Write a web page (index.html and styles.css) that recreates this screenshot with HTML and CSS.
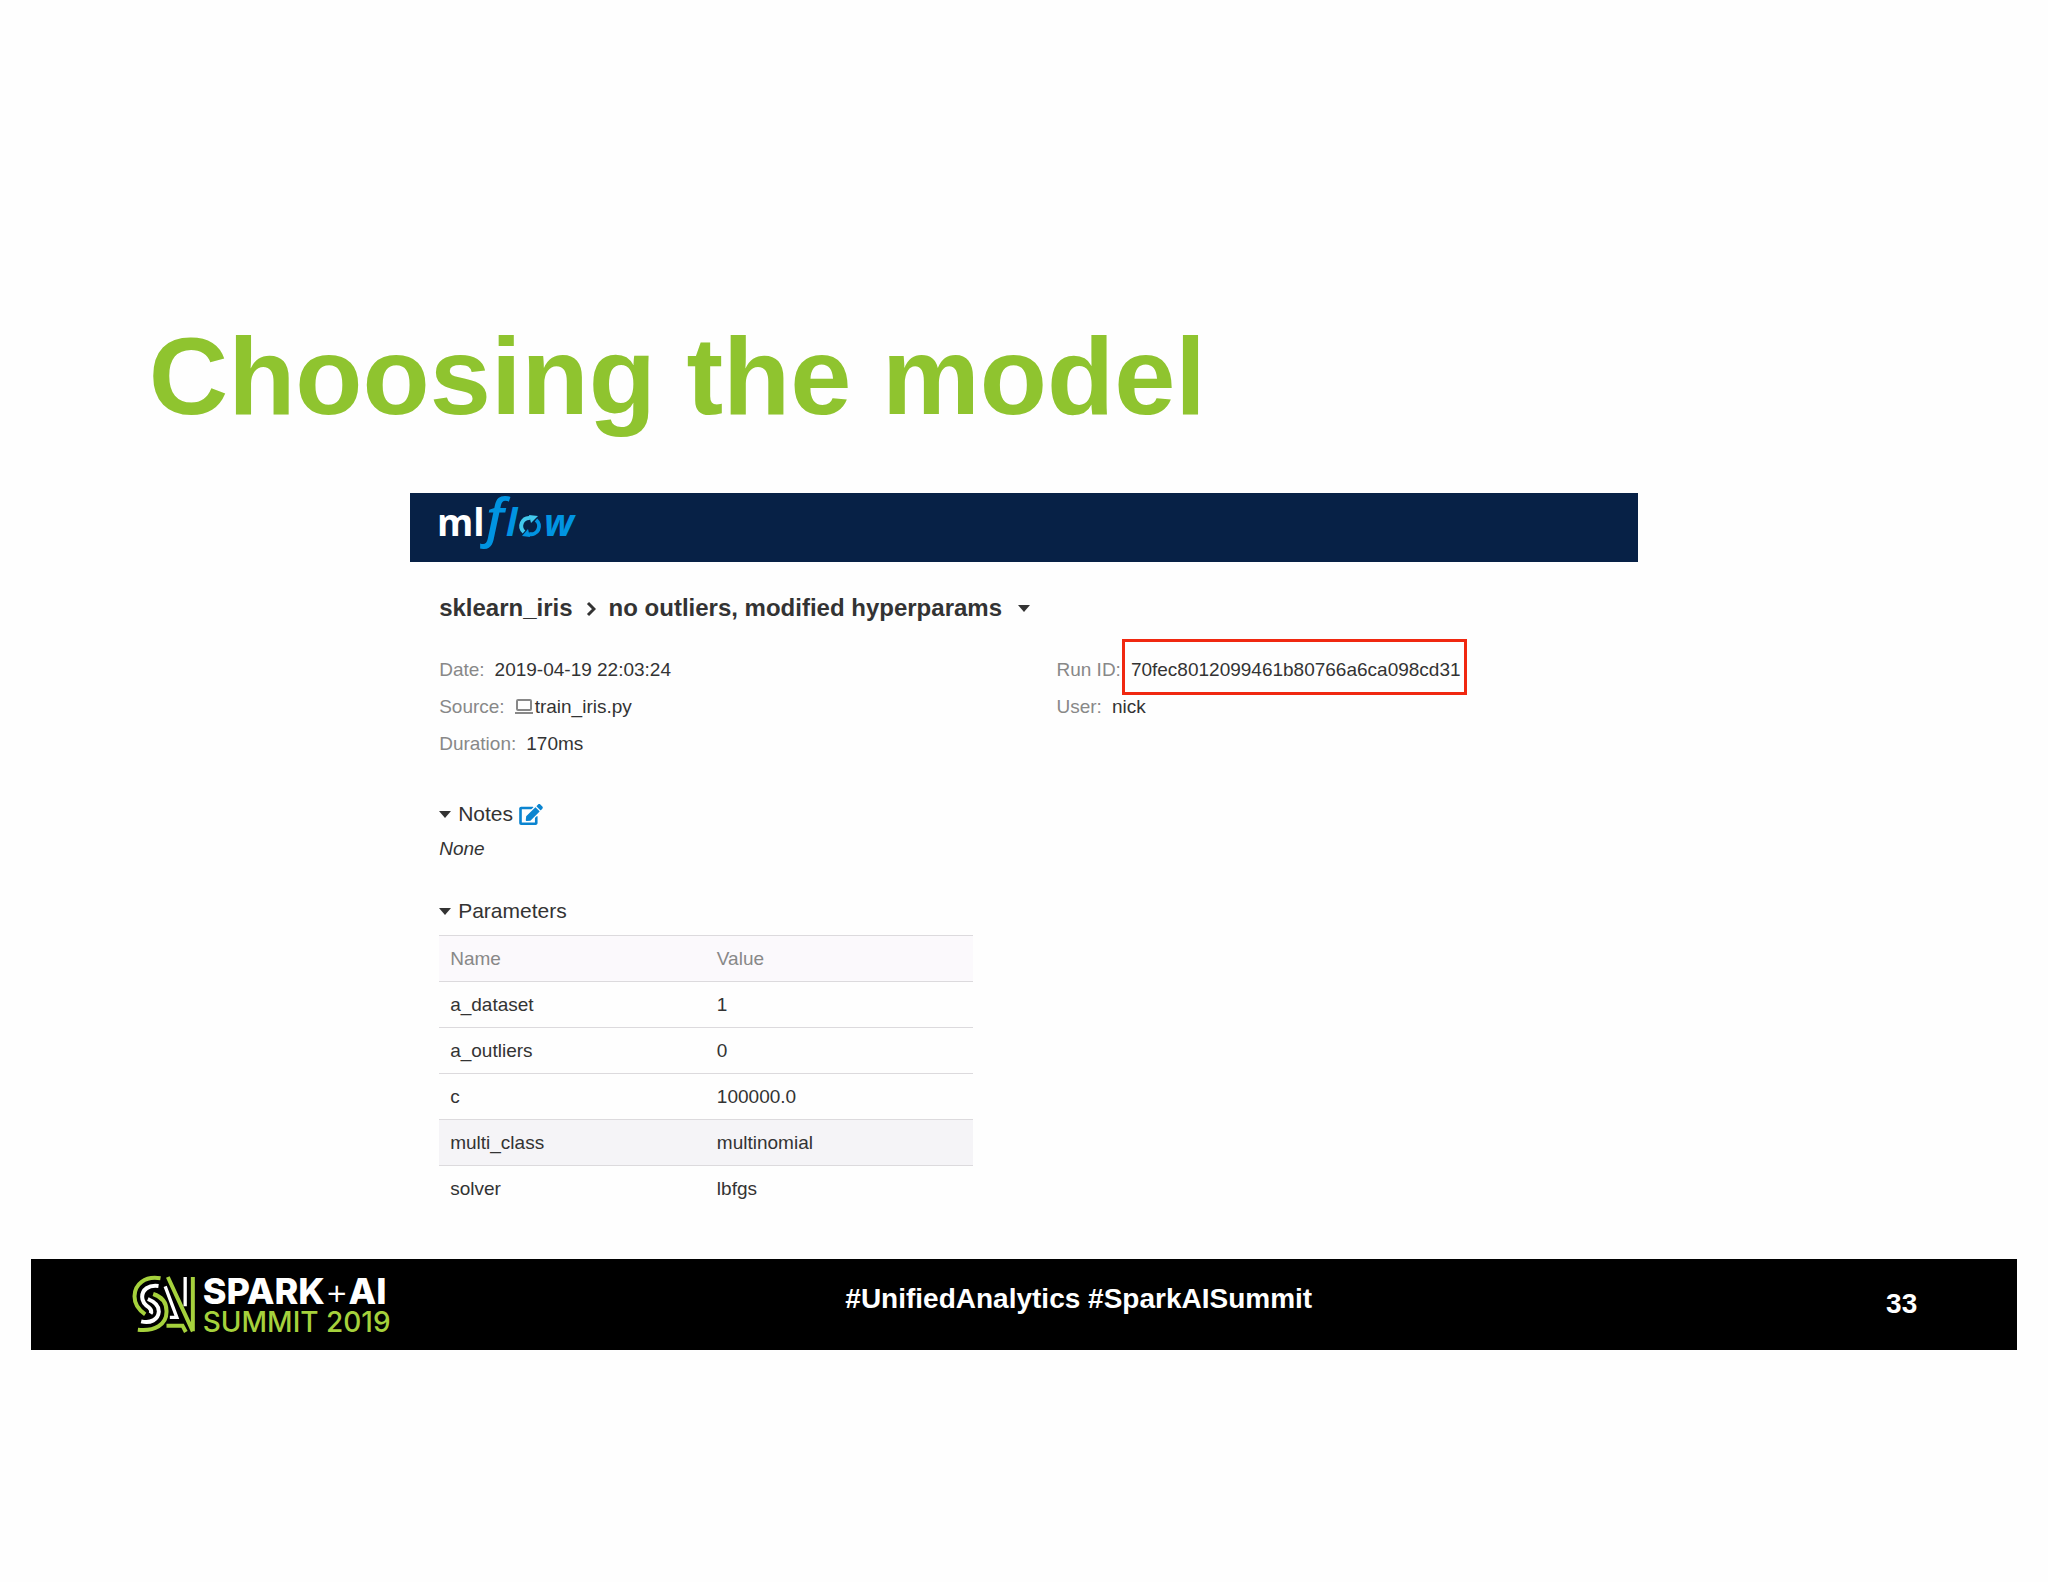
FILE: index.html
```html
<!DOCTYPE html>
<html lang="en">

<head>
    <meta charset="utf-8">
    <meta name="viewport" content="width=device-width, initial-scale=1">

    <title>Choosing the model</title>

    <link rel="stylesheet" href="styles.css">
</head>

<body>
    <main class="slide">
        <h1 class="slide-title">Choosing the model</h1>

        <section class="tracker">
            <header class="tracker-bar">
                <svg class="mlflow-logo" viewBox="0 0 144 60" role="img" aria-label="mlflow">
                    <text class="logo-ml" x="0" y="43">ml</text>
                    <text class="logo-f" x="49" y="43">f</text>
                    <text class="logo-low" x="69" y="43">l</text>
                    <text class="logo-low" x="107" y="43">w</text>
                    <path d="M87 39 A8 8 0 0 1 93 25" fill="none" stroke="#43c9ed" stroke-width="4" />
                    <path d="M92 22 L101 23 L94 30 Z" fill="#43c9ed" />
                    <path d="M99 27 A8 8 0 0 1 92 41" fill="none" stroke="#0194e2" stroke-width="4" />
                    <path d="M93 44 L85 43 L91 36 Z" fill="#0194e2" />
                </svg>
            </header>

            <div class="run">
                <h2 class="breadcrumb">
                    <a href="#">sklearn_iris</a>
                    <svg class="chevron" viewBox="0 0 10 16" aria-hidden="true">
                        <path d="M2 2 L8 8 L2 14" />
                    </svg>
                    <span>no outliers, modified hyperparams</span>
                    <button class="menu-button" type="button" aria-label="Run actions"><span class="caret"></span></button>
                </h2>

                <div class="run-info">
                    <dl>
                        <div><dt>Date:</dt><dd>2019-04-19 22:03:24</dd></div>
                        <div>
                            <dt>Source:</dt>
                            <dd>
                                <svg class="laptop" viewBox="0 0 18 16" aria-hidden="true">
                                    <rect x="2" y="1" width="14" height="10" rx="1" />
                                    <path d="M0 14 H18" />
                                </svg>train_iris.py
                            </dd>
                        </div>
                        <div><dt>Duration:</dt><dd>170ms</dd></div>
                    </dl>
                    <dl>
                        <div><dt>Run ID:</dt><dd class="run-id">70fec8012099461b80766a6ca098cd31</dd></div>
                        <div><dt>User:</dt><dd>nick</dd></div>
                    </dl>
                </div>

                <h3 class="section-title">
                    <span class="caret"></span>Notes
                    <button class="edit-button" type="button" aria-label="Edit notes">
                        <svg viewBox="0 0 576 512" aria-hidden="true">
                            <path d="M402.600 83.200l90.200 90.200c3.800 3.800 3.800 10 0 13.800L274.400 405.600l-92.800 10.300c-12.400 1.400-22.900-9.100-21.500-21.500l10.300-92.800L388.800 83.200c3.800-3.800 10-3.800 13.800 0zm162-22.900l-48.800-48.800c-15.200-15.200-39.900-15.200-55.200 0l-35.400 35.400c-3.800 3.800-3.800 10 0 13.800l90.200 90.200c3.800 3.800 10 3.800 13.800 0l35.400-35.400c15.200-15.300 15.200-40 0-55.200zM384 346.200V448H64V128h229.800c3.200 0 6.200-1.300 8.500-3.500l40-40c7.600-7.600 2.200-20.500-8.500-20.500H48C21.500 64 0 85.500 0 112v352c0 26.500 21.500 48 48 48h352c26.500 0 48-21.500 48-48V306.200c0-10.700-12.900-16-20.500-8.500l-40 40c-2.200 2.300-3.500 5.300-3.500 8.500z" />
                        </svg>
                    </button>
                </h3>
                <p class="note">None</p>

                <h3 class="section-title">
                    <span class="caret"></span>Parameters
                </h3>
                <table class="params">
                    <thead>
                        <tr><th scope="col">Name</th><th scope="col">Value</th></tr>
                    </thead>
                    <tbody>
                        <tr><td>a_dataset</td><td>1</td></tr>
                        <tr><td>a_outliers</td><td>0</td></tr>
                        <tr><td>c</td><td>100000.0</td></tr>
                        <tr class="hovered"><td>multi_class</td><td>multinomial</td></tr>
                        <tr><td>solver</td><td>lbfgs</td></tr>
                    </tbody>
                </table>
            </div>
        </section>

        <footer class="slide-footer">
            <div class="summit">
                <svg class="summit-mark" viewBox="64 74 194 174" aria-hidden="true">
                    <g fill="none" stroke-width="12">
                        <path stroke="#a5d13c" d="M152 84 C105 76 74 102 74 138 C74 164 88 180 106 192" />
                        <path stroke="#fff" d="M146 107 C116 103 97 118 97 140 C97 154 106 164 118 172 C124 177 126 184 122 190" />
                        <path stroke="#fff" d="M114 146 C134 154 148 168 147 184 C145 208 122 220 94 213" />
                        <path stroke="#a5d13c" d="M130 131 C158 140 171 160 170 185 C170 222 135 244 84 238" />
                        <path stroke="#a5d13c" d="M174 80 L249 243 M249 80 V243 M170 226 H218 L228 245" />
                        <path stroke="#fff" stroke-width="10" d="M226 80 V168 M166 108 L201 201 H180" />
                    </g>
                </svg>
                <div class="summit-name">
                    <strong>SPARK<span class="plus">+</span>AI</strong>
                    <span class="summit-year">SUMMIT 2019</span>
                </div>
            </div>
            <p class="hashtags">#UnifiedAnalytics #SparkAISummit</p>
            <p class="page-number">33</p>
        </footer>
    </main>
</body>

</html>
```

FILE: styles.css
```css
* {
    margin: 0;
    padding: 0;
    box-sizing: border-box;
}

body {
    background: #fefefe;
    color: #333;
    font-family: 'Liberation Sans', Arial, Helvetica, sans-serif;
    font-size: 19px;
}

button {
    border: 0;
    background: none;
    cursor: pointer;
}

.slide {
    width: 97%;
    margin: 0 auto;
    padding-top: 312px;
}

.slide-title {
    margin-left: 118px;
    color: #8fc42f;
    font-size: 110px;
    line-height: 128px;
}

/* Run page */
.tracker {
    width: 61.8%;
    margin: 53px auto 0;
}

.tracker-bar {
    display: flex;
    height: 69px;
    padding-left: 27px;
    background: #072146;
}

.mlflow-logo {
    width: 144px;
    height: 60px;
    overflow: visible;
    font-family: 'Open Sans', 'Noto Sans', sans-serif;
    font-weight: 700;
}

.logo-ml {
    fill: #fff;
    font-size: 37px;
}

.logo-f,
.logo-low {
    fill: #0194e2;
    font-size: 38px;
    font-style: italic;
}

.logo-f {
    font-size: 53px;
    font-weight: 600;
}

.run {
    padding: 31px 0 0 29px;
}

.breadcrumb {
    display: flex;
    align-items: center;
    font-size: 24px;
    line-height: 30px;
}

.breadcrumb a {
    color: inherit;
    text-decoration: none;
}

.chevron {
    width: 10px;
    height: 16px;
    margin: 2px 13px 0;
    fill: none;
    stroke: #333;
    stroke-width: 3;
}

.menu-button {
    display: flex;
    margin-left: 16px;
}

.caret {
    border: 6px solid transparent;
    border-top: 7px solid #333;
    border-bottom: 0;
}

.run-info {
    display: grid;
    grid-template-columns: 51.5% 1fr;
    margin: 28px 0 37px;
    line-height: 37px;
}

.run-info dl > div {
    display: flex;
    gap: 10px;
}

dt {
    color: #888;
}

.laptop {
    width: 18px;
    height: 16px;
    margin-right: 2px;
    vertical-align: -2px;
    fill: none;
    stroke: #888;
    stroke-width: 2;
}

.run-id {
    position: relative;
}

/* Marker box around the run ID */
.run-id::after {
    content: '';
    position: absolute;
    inset: -12px -6px -7px -9px;
    border: 3px solid #f02810;
}

.section-title {
    display: flex;
    align-items: center;
    font-size: 21px;
    font-weight: normal;
    line-height: 30px;
}

.section-title .caret {
    margin-right: 7px;
}

.edit-button {
    display: flex;
    margin-left: 6px;
}

.edit-button svg {
    width: 24px;
    height: 21px;
    fill: #0a84d0;
}

.note {
    margin-bottom: 27px;
    font-style: italic;
    line-height: 40px;
}

.params {
    width: 44.5%;
    margin-top: 9px;
    border-collapse: collapse;
    table-layout: fixed;
}

.params th,
.params td {
    height: 46px;
    padding: 0 11px;
    border-top: 1px solid #dcdadd;
    text-align: left;
}

.params th {
    background: #fbf9fc;
    color: #888;
    font-weight: normal;
}

.params .hovered {
    background: #f5f4f7;
}

/* Footer */
.slide-footer {
    display: grid;
    grid-template-columns: 40% auto 1fr;
    height: 91px;
    margin-top: 47px;
    padding: 0 100px;
    background: #000;
    color: #fff;
    font-size: 28px;
    font-weight: bold;
    line-height: 32px;
}

.summit {
    display: flex;
    gap: 7px;
    padding-top: 16px;
}

.summit-mark {
    width: 65px;
    height: 58px;
}

.summit-name {
    display: flex;
    flex-direction: column;
    font-family: Inter, 'Liberation Sans', sans-serif;
}

.summit-name strong {
    font-size: 36px;
    font-weight: 800;
    line-height: 32px;
}

.summit-name .plus {
    font-weight: 300;
}

.summit-year {
    color: #a5d13c;
    font-size: 28px;
    font-weight: 500;
    line-height: 30px;
}

.hashtags {
    padding-top: 24px;
}

.page-number {
    padding-top: 29px;
    text-align: right;
}
```
